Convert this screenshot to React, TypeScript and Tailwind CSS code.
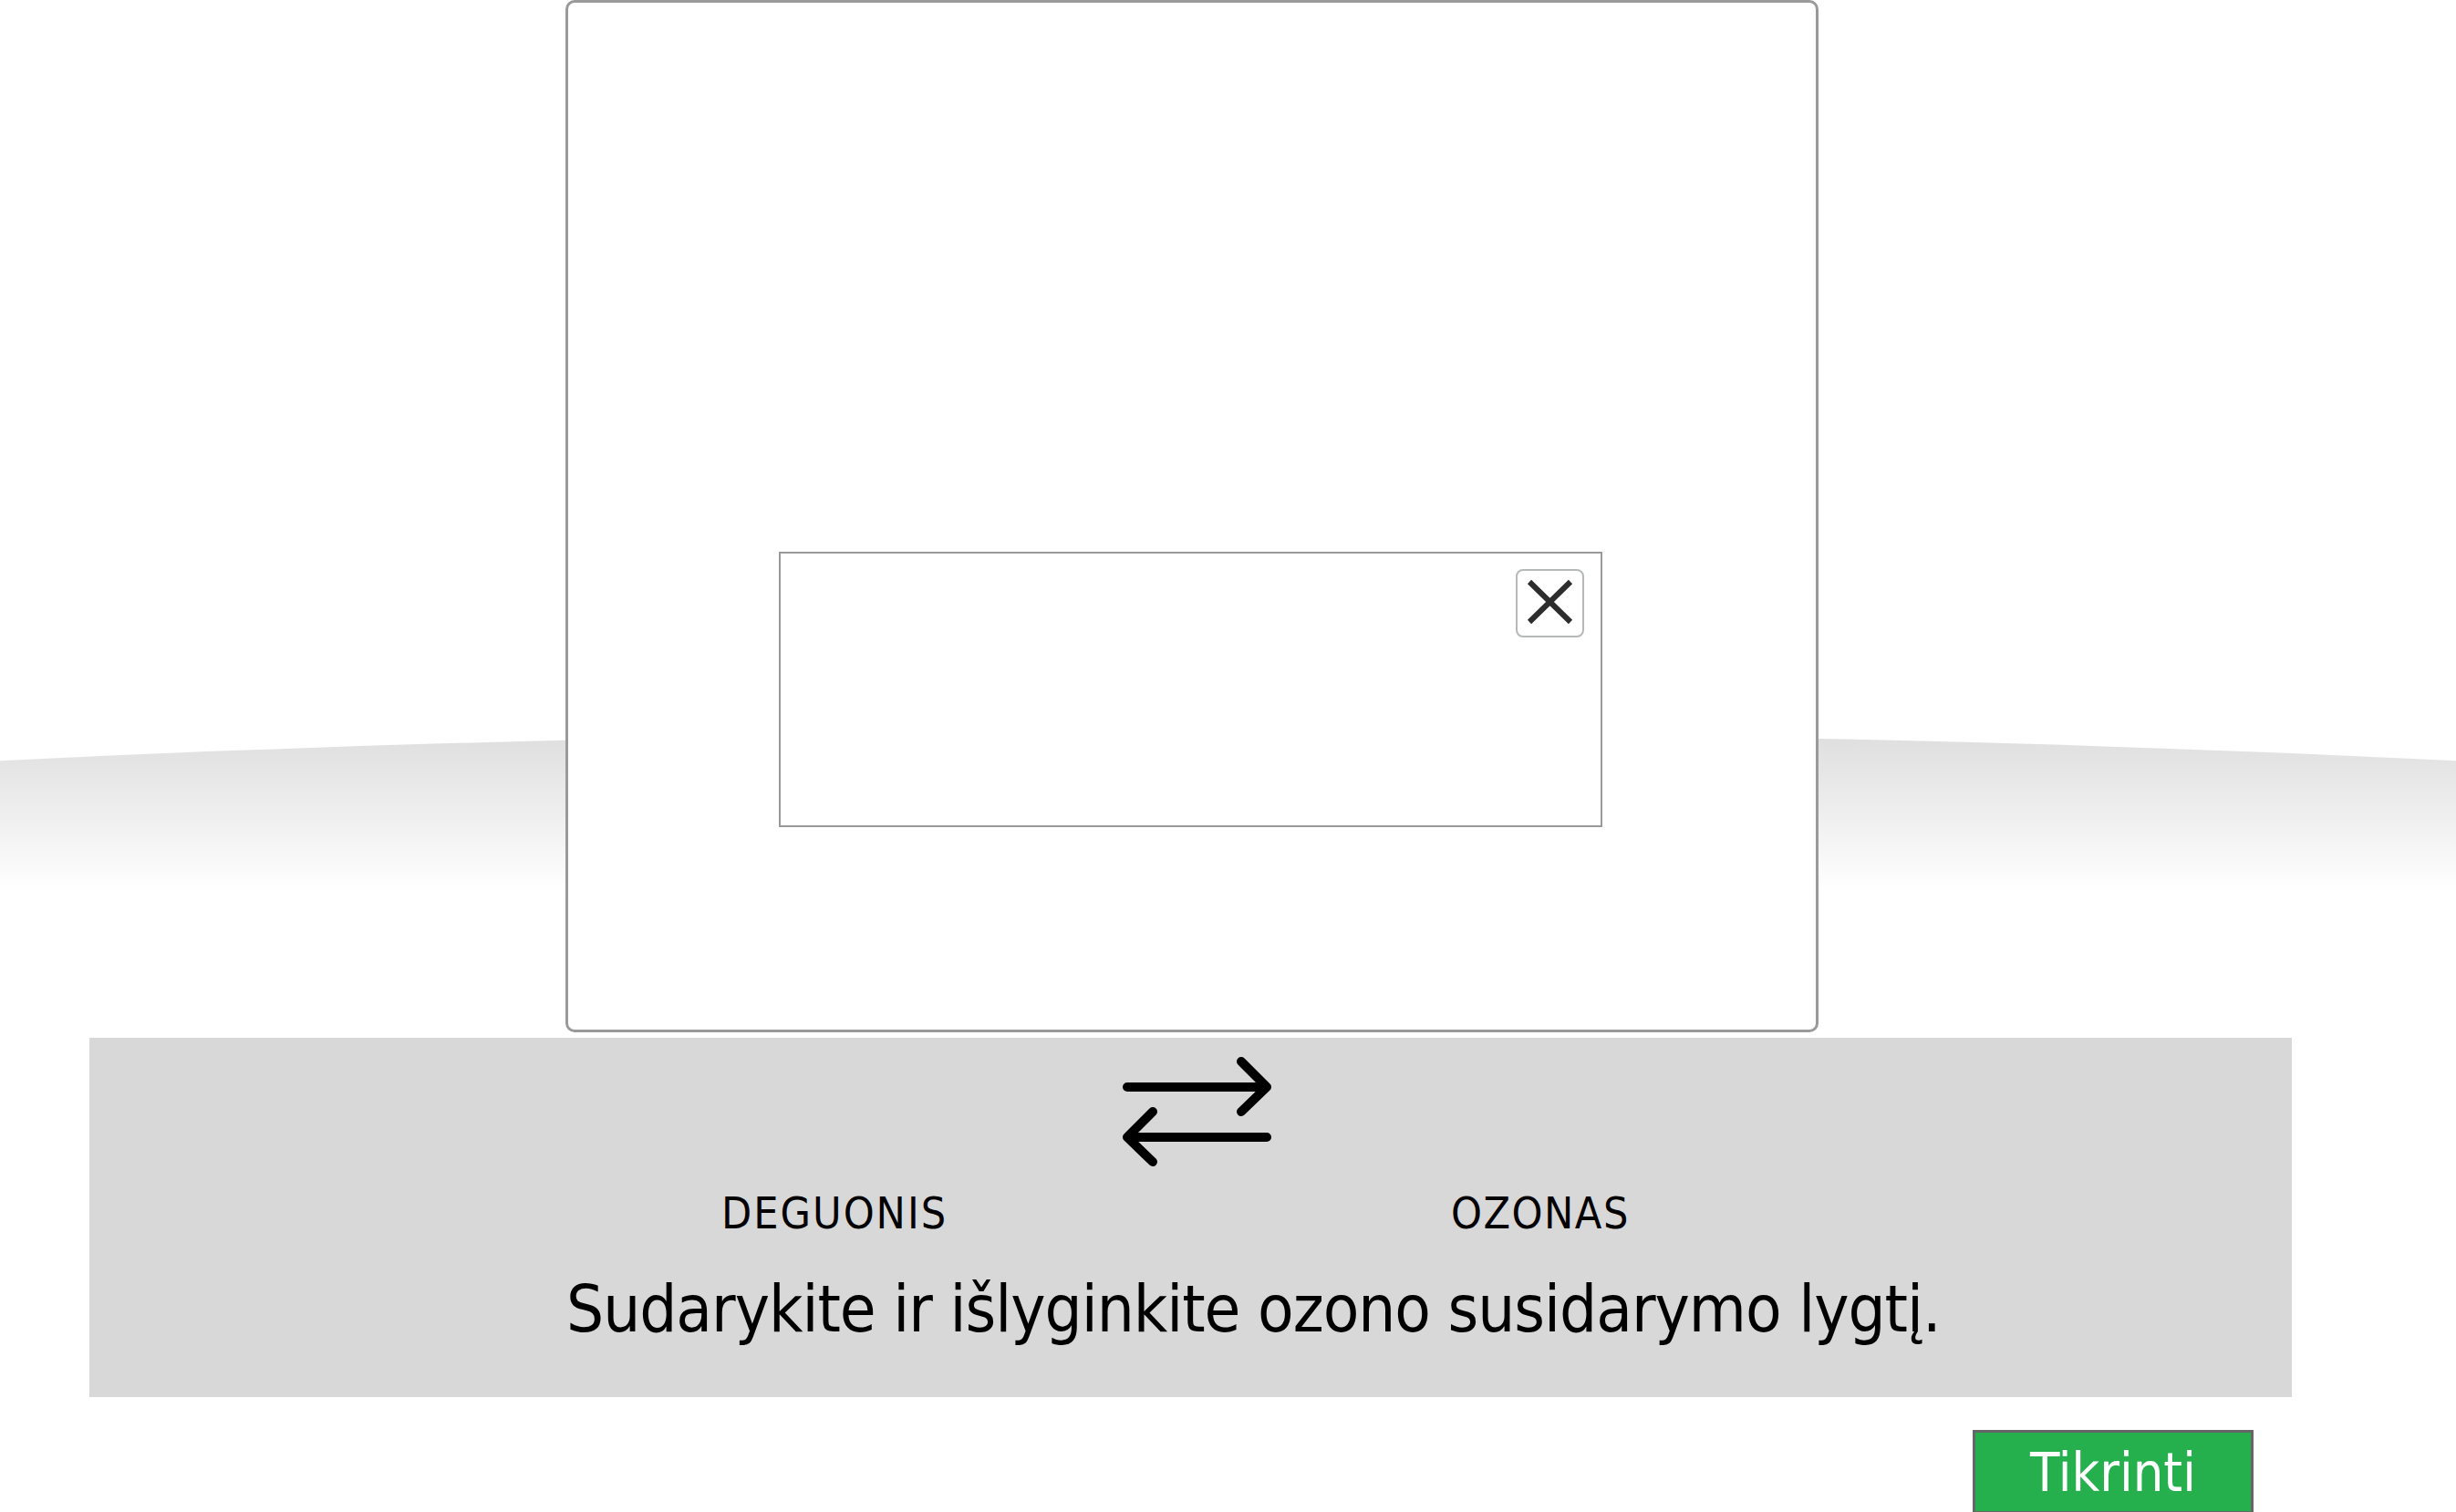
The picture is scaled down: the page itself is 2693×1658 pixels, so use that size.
export default function App() {
  return (
    <div className="relative h-[1658px] w-full overflow-hidden bg-white font-['DejaVu_Sans_Condensed','DejaVu_Sans',sans-serif] text-black">
      {/* floor gradient behind the stage */}
      <div className="absolute left-[-1654px] top-[803px] h-[586px] w-[6000px] rounded-[50%] bg-gradient-to-b from-[#dedede] to-white to-30%" />

      <div className="relative flex flex-col">
        {/* Stage panel */}
        <div className="ml-[620px] h-[1132px] w-[1374px] rounded-[10px] border-[3px] border-[#9a9a9a] bg-white pl-[231px] pt-[602px]">
          <div className="flex h-[302px] w-[903px] justify-end border-2 border-[#9a9a9a] bg-white pr-[18px] pt-[17px]">
            <button className="flex h-[75px] w-[75px] items-center justify-center rounded-[8px] border-2 border-[#b5b9b9] bg-white">
              <svg width="71" height="71" viewBox="0 0 71 71">
                <path d="M13 12 L58 56 M58 12 L13 56" stroke="#2d2d2d" strokeWidth="6" fill="none" />
              </svg>
            </button>
          </div>
        </div>

        {/* Reaction band */}
        <div className="ml-[98px] mt-[6px] flex h-[394px] w-[2415px] flex-col bg-[#d8d8d8]">
          <svg className="ml-[1127px] mt-[17px]" width="175" height="130" viewBox="0 0 175 130">
            <g stroke="#000" strokeWidth="10" strokeLinecap="round" strokeLinejoin="round" fill="none">
              <path d="M11 37 H164 M136 9 L164 37 L136 64" />
              <path d="M164 92 H11 M39 64 L11 92 L39 119" />
            </g>
          </svg>
          <div className="mt-[21px] flex text-[48px] leading-none">
            <div className="ml-[693px] w-[800px] tracking-[2px]">DEGUONIS</div>
            <div className="tracking-[1.5px]">OZONAS</div>
          </div>
          <div className="ml-[523px] mt-[45px] text-[72px] leading-none tracking-[-1px]">
            Sudarykite ir išlyginkite ozono susidarymo lygtį.
          </div>
        </div>

        <div className="ml-[2163px] mt-[36px]">
          <button className="flex h-[92px] w-[308px] items-center justify-center border-[3px] border-[#666] bg-[#25b04d] text-[59px] leading-none text-white">
            Tikrinti
          </button>
        </div>
      </div>
    </div>
  );
}
